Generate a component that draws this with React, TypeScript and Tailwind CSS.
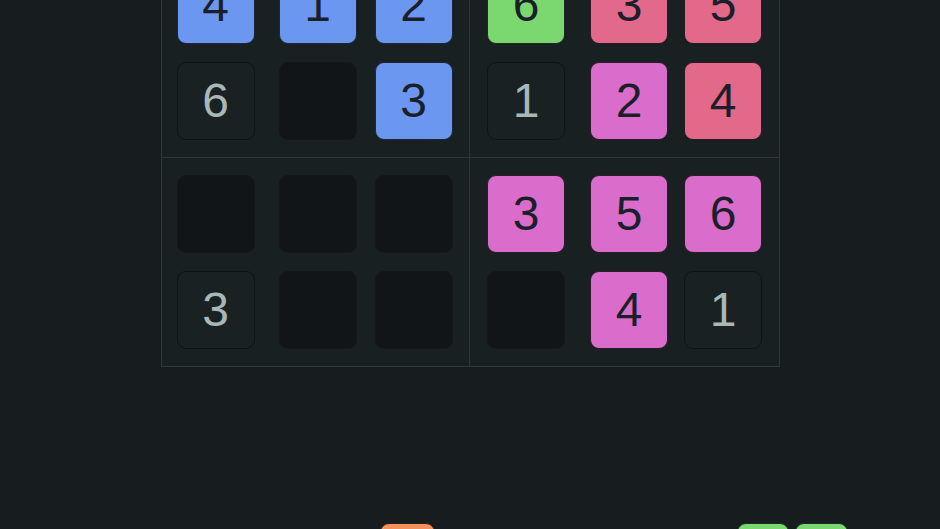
import React from 'react';

type Kind = 'blue' | 'green' | 'red' | 'pink' | 'given' | 'empty';

interface Cell {
  kind: Kind;
  value?: number;
}

const kindClass: Record<Kind, string> = {
  blue: 'bg-[#6b97f1] border-[#1d2634] text-[#1a1f29]',
  green: 'bg-[#7bd870] border-[#1d2a1f] text-[#1a1f29]',
  red: 'bg-[#e3698a] border-[#2a1b20] text-[#1a1f29]',
  pink: 'bg-[#da6ccb] border-[#2a1b28] text-[#1a1f29]',
  given: 'bg-[#1a2123] border-[#0f1314] text-[#a9b8b7]',
  empty: 'bg-[#111517] border-[#131819] text-transparent',
};

// Column offsets per box, taken from the screenshot (cells are not evenly spaced)
const leftCols = ['ml-[15px]', 'ml-[24px]', 'ml-[18px]'];
const rightCols = ['ml-[17px]', 'ml-[25px]', 'ml-[16px]'];

const boxes: { cols: string[]; border: string; rows: Cell[][] }[] = [
  {
    cols: leftCols,
    border: 'border-r border-b',
    rows: [
      [
        { kind: 'blue', value: 4 },
        { kind: 'blue', value: 1 },
        { kind: 'blue', value: 2 },
      ],
      [{ kind: 'given', value: 6 }, { kind: 'empty' }, { kind: 'blue', value: 3 }],
    ],
  },
  {
    cols: rightCols,
    border: 'border-b',
    rows: [
      [
        { kind: 'green', value: 6 },
        { kind: 'red', value: 3 },
        { kind: 'red', value: 5 },
      ],
      [
        { kind: 'given', value: 1 },
        { kind: 'pink', value: 2 },
        { kind: 'red', value: 4 },
      ],
    ],
  },
  {
    cols: leftCols,
    border: 'border-r',
    rows: [
      [{ kind: 'empty' }, { kind: 'empty' }, { kind: 'empty' }],
      [{ kind: 'given', value: 3 }, { kind: 'empty' }, { kind: 'empty' }],
    ],
  },
  {
    cols: rightCols,
    border: '',
    rows: [
      [
        { kind: 'pink', value: 3 },
        { kind: 'pink', value: 5 },
        { kind: 'pink', value: 6 },
      ],
      [{ kind: 'empty' }, { kind: 'pink', value: 4 }, { kind: 'given', value: 1 }],
    ],
  },
];

function Tile({ cell, offset }: { cell: Cell; offset: string }) {
  return (
    <div
      className={`${offset} flex h-[78px] w-[78px] items-center justify-center rounded-[9px] border text-[48px] leading-none ${kindClass[cell.kind]}`}
    >
      {cell.value ?? ''}
    </div>
  );
}

export default function App() {
  return (
    <div
      className="flex h-[529px] w-full flex-col items-center overflow-hidden bg-[#171d1f]"
      style={{ fontFamily: '"Liberation Sans", Arial, sans-serif' }}
    >
      {/* Board: 2x2 boxes of 2x3 cells */}
      <div className="-mt-[52px] grid w-[619px] grid-cols-2 border border-[#2a3838] bg-[#192022]">
        {boxes.map((box, b) => (
          <div
            key={b}
            className={`flex flex-col gap-[18px] border-[#2a3838] py-[17px] ${box.border}`}
          >
            {box.rows.map((row, r) => (
              <div key={r} className="flex">
                {row.map((cell, c) => (
                  <Tile key={c} cell={cell} offset={box.cols[c]} />
                ))}
              </div>
            ))}
          </div>
        ))}
      </div>

      {/* Piece tray, mostly below the fold */}
      <div className="mt-[156px] flex w-full shrink-0">
        <div className="ml-[380px] h-[55px] w-[55px] rounded-[9px] border border-[#2a1d15] bg-[#f2915b]" />
        <div className="ml-[302px] flex gap-[6px]">
          <div className="h-[55px] w-[52px] rounded-[9px] border border-[#1d2a1f] bg-[#7bd870]" />
          <div className="h-[55px] w-[53px] rounded-[9px] border border-[#1d2a1f] bg-[#7bd870]" />
        </div>
      </div>
    </div>
  );
}
